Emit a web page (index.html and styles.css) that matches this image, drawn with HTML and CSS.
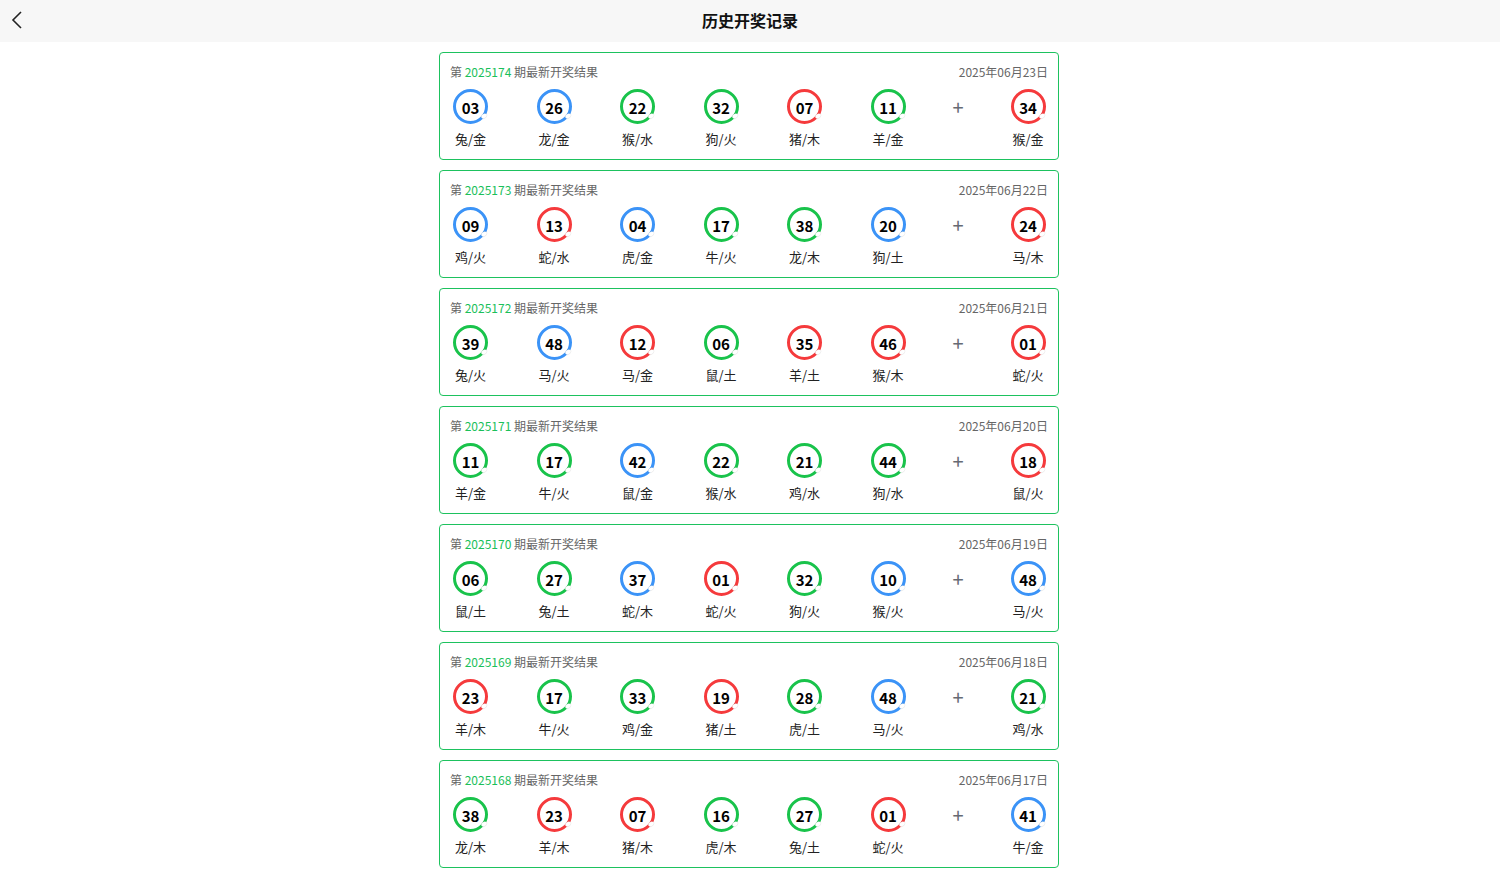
FILE: index.html
```html
<!DOCTYPE html>
<html lang="zh-CN">
<head>
<meta charset="utf-8">
<title>历史开奖记录</title>
<link rel="stylesheet" href="styles.css">
</head>
<body>
<header class="topbar">
  <span class="back"><svg width="12" height="18" viewBox="0 0 12 18"><path d="M10 1 L2 9 L10 17" fill="none" stroke="#222" stroke-width="1.6"/></svg></span>
  <h1 class="title">历史开奖记录</h1>
</header>
<main class="list">
  <section class="card">
    <div class="card-head"><span>第 <em>2025174</em> 期最新开奖结果</span><span>2025年06月23日</span></div>
    <div class="balls">
      <div class="item"><span class="ball blue">03</span><span class="tag">兔/金</span></div>
      <div class="item"><span class="ball blue">26</span><span class="tag">龙/金</span></div>
      <div class="item"><span class="ball green">22</span><span class="tag">猴/水</span></div>
      <div class="item"><span class="ball green">32</span><span class="tag">狗/火</span></div>
      <div class="item"><span class="ball red">07</span><span class="tag">猪/木</span></div>
      <div class="item"><span class="ball green">11</span><span class="tag">羊/金</span></div>
      <div class="plus">+</div>
      <div class="item"><span class="ball red">34</span><span class="tag">猴/金</span></div>
    </div>
  </section>
  <section class="card">
    <div class="card-head"><span>第 <em>2025173</em> 期最新开奖结果</span><span>2025年06月22日</span></div>
    <div class="balls">
      <div class="item"><span class="ball blue">09</span><span class="tag">鸡/火</span></div>
      <div class="item"><span class="ball red">13</span><span class="tag">蛇/水</span></div>
      <div class="item"><span class="ball blue">04</span><span class="tag">虎/金</span></div>
      <div class="item"><span class="ball green">17</span><span class="tag">牛/火</span></div>
      <div class="item"><span class="ball green">38</span><span class="tag">龙/木</span></div>
      <div class="item"><span class="ball blue">20</span><span class="tag">狗/土</span></div>
      <div class="plus">+</div>
      <div class="item"><span class="ball red">24</span><span class="tag">马/木</span></div>
    </div>
  </section>
  <section class="card">
    <div class="card-head"><span>第 <em>2025172</em> 期最新开奖结果</span><span>2025年06月21日</span></div>
    <div class="balls">
      <div class="item"><span class="ball green">39</span><span class="tag">兔/火</span></div>
      <div class="item"><span class="ball blue">48</span><span class="tag">马/火</span></div>
      <div class="item"><span class="ball red">12</span><span class="tag">马/金</span></div>
      <div class="item"><span class="ball green">06</span><span class="tag">鼠/土</span></div>
      <div class="item"><span class="ball red">35</span><span class="tag">羊/土</span></div>
      <div class="item"><span class="ball red">46</span><span class="tag">猴/木</span></div>
      <div class="plus">+</div>
      <div class="item"><span class="ball red">01</span><span class="tag">蛇/火</span></div>
    </div>
  </section>
  <section class="card">
    <div class="card-head"><span>第 <em>2025171</em> 期最新开奖结果</span><span>2025年06月20日</span></div>
    <div class="balls">
      <div class="item"><span class="ball green">11</span><span class="tag">羊/金</span></div>
      <div class="item"><span class="ball green">17</span><span class="tag">牛/火</span></div>
      <div class="item"><span class="ball blue">42</span><span class="tag">鼠/金</span></div>
      <div class="item"><span class="ball green">22</span><span class="tag">猴/水</span></div>
      <div class="item"><span class="ball green">21</span><span class="tag">鸡/水</span></div>
      <div class="item"><span class="ball green">44</span><span class="tag">狗/水</span></div>
      <div class="plus">+</div>
      <div class="item"><span class="ball red">18</span><span class="tag">鼠/火</span></div>
    </div>
  </section>
  <section class="card">
    <div class="card-head"><span>第 <em>2025170</em> 期最新开奖结果</span><span>2025年06月19日</span></div>
    <div class="balls">
      <div class="item"><span class="ball green">06</span><span class="tag">鼠/土</span></div>
      <div class="item"><span class="ball green">27</span><span class="tag">兔/土</span></div>
      <div class="item"><span class="ball blue">37</span><span class="tag">蛇/木</span></div>
      <div class="item"><span class="ball red">01</span><span class="tag">蛇/火</span></div>
      <div class="item"><span class="ball green">32</span><span class="tag">狗/火</span></div>
      <div class="item"><span class="ball blue">10</span><span class="tag">猴/火</span></div>
      <div class="plus">+</div>
      <div class="item"><span class="ball blue">48</span><span class="tag">马/火</span></div>
    </div>
  </section>
  <section class="card">
    <div class="card-head"><span>第 <em>2025169</em> 期最新开奖结果</span><span>2025年06月18日</span></div>
    <div class="balls">
      <div class="item"><span class="ball red">23</span><span class="tag">羊/木</span></div>
      <div class="item"><span class="ball green">17</span><span class="tag">牛/火</span></div>
      <div class="item"><span class="ball green">33</span><span class="tag">鸡/金</span></div>
      <div class="item"><span class="ball red">19</span><span class="tag">猪/土</span></div>
      <div class="item"><span class="ball green">28</span><span class="tag">虎/土</span></div>
      <div class="item"><span class="ball blue">48</span><span class="tag">马/火</span></div>
      <div class="plus">+</div>
      <div class="item"><span class="ball green">21</span><span class="tag">鸡/水</span></div>
    </div>
  </section>
  <section class="card">
    <div class="card-head"><span>第 <em>2025168</em> 期最新开奖结果</span><span>2025年06月17日</span></div>
    <div class="balls">
      <div class="item"><span class="ball green">38</span><span class="tag">龙/木</span></div>
      <div class="item"><span class="ball red">23</span><span class="tag">羊/木</span></div>
      <div class="item"><span class="ball red">07</span><span class="tag">猪/木</span></div>
      <div class="item"><span class="ball green">16</span><span class="tag">虎/木</span></div>
      <div class="item"><span class="ball green">27</span><span class="tag">兔/土</span></div>
      <div class="item"><span class="ball red">01</span><span class="tag">蛇/火</span></div>
      <div class="plus">+</div>
      <div class="item"><span class="ball blue">41</span><span class="tag">牛/金</span></div>
    </div>
  </section>
</main>
</body>
</html>
```
FILE: styles.css
```css
* { box-sizing: border-box; }
html, body { margin: 0; padding: 0; background: #fff; }
body {
  font-family: "Noto Sans CJK SC", "Noto Sans", sans-serif;
  color: #333;
}
.topbar {
  height: 42px;
  background: #f7f7f7;
  display: flex;
  align-items: center;
  justify-content: center;
  position: relative;
  padding-bottom: 2px;
}
.back {
  position: absolute;
  left: 11px;
  top: 11px;
  width: 12px;
  height: 18px;
  display: flex;
}
.title {
  margin: 0;
  font-size: 16px;
  font-weight: 700;
  color: #111;
  line-height: 22px;
}
.list {
  width: 620px;
  margin: 10px 0 0 calc(50% - 311px);
  display: flex;
  flex-direction: column;
  gap: 10px;
}
.card {
  height: 108px;
  border: 1px solid #1dc25e;
  border-radius: 4px;
  padding: 10px 10px 0 10px;
}
.card-head {
  display: flex;
  justify-content: space-between;
  font-size: 12px;
  line-height: 18px;
  color: #666;
}
.card-head em {
  font-style: normal;
  color: #1ac05a;
}
.balls {
  display: flex;
  justify-content: space-between;
  align-items: flex-start;
  margin-top: 8px;
  padding-left: 0.5px;
}
.item {
  width: 40px;
  display: flex;
  flex-direction: column;
  align-items: center;
}
.ball {
  position: relative;
  width: 35px;
  height: 35px;
  border-radius: 50%;
  border: 3.6px solid #3c93f6;
  background: #fff;
  display: flex;
  align-items: center;
  justify-content: center;
  font-size: 15px;
  font-weight: 700;
  color: #000;
  line-height: 1;
  padding-top: 1px;
}
.ball::after {
  content: "";
  position: absolute;
  right: -2px;
  bottom: 3px;
  width: 6px;
  height: 4px;
  border-radius: 50%;
  background: #fff;
  box-shadow: 0 0 0 0.6px rgba(0,0,0,0.08);
  transform: rotate(-40deg);
}
.ball.blue { border-color: #3b93f7; }
.ball.green { border-color: #19c34b; }
.ball.red { border-color: #f53a3c; }
.tag {
  margin-top: 6px;
  font-size: 13px;
  line-height: 18px;
  color: #222;
  white-space: nowrap;
}
.plus {
  width: 13px;
  height: 35px;
  display: flex;
  align-items: center;
  justify-content: center;
  font-size: 20px;
  font-weight: 400;
  color: #666a73;
  line-height: 1;
}
```
